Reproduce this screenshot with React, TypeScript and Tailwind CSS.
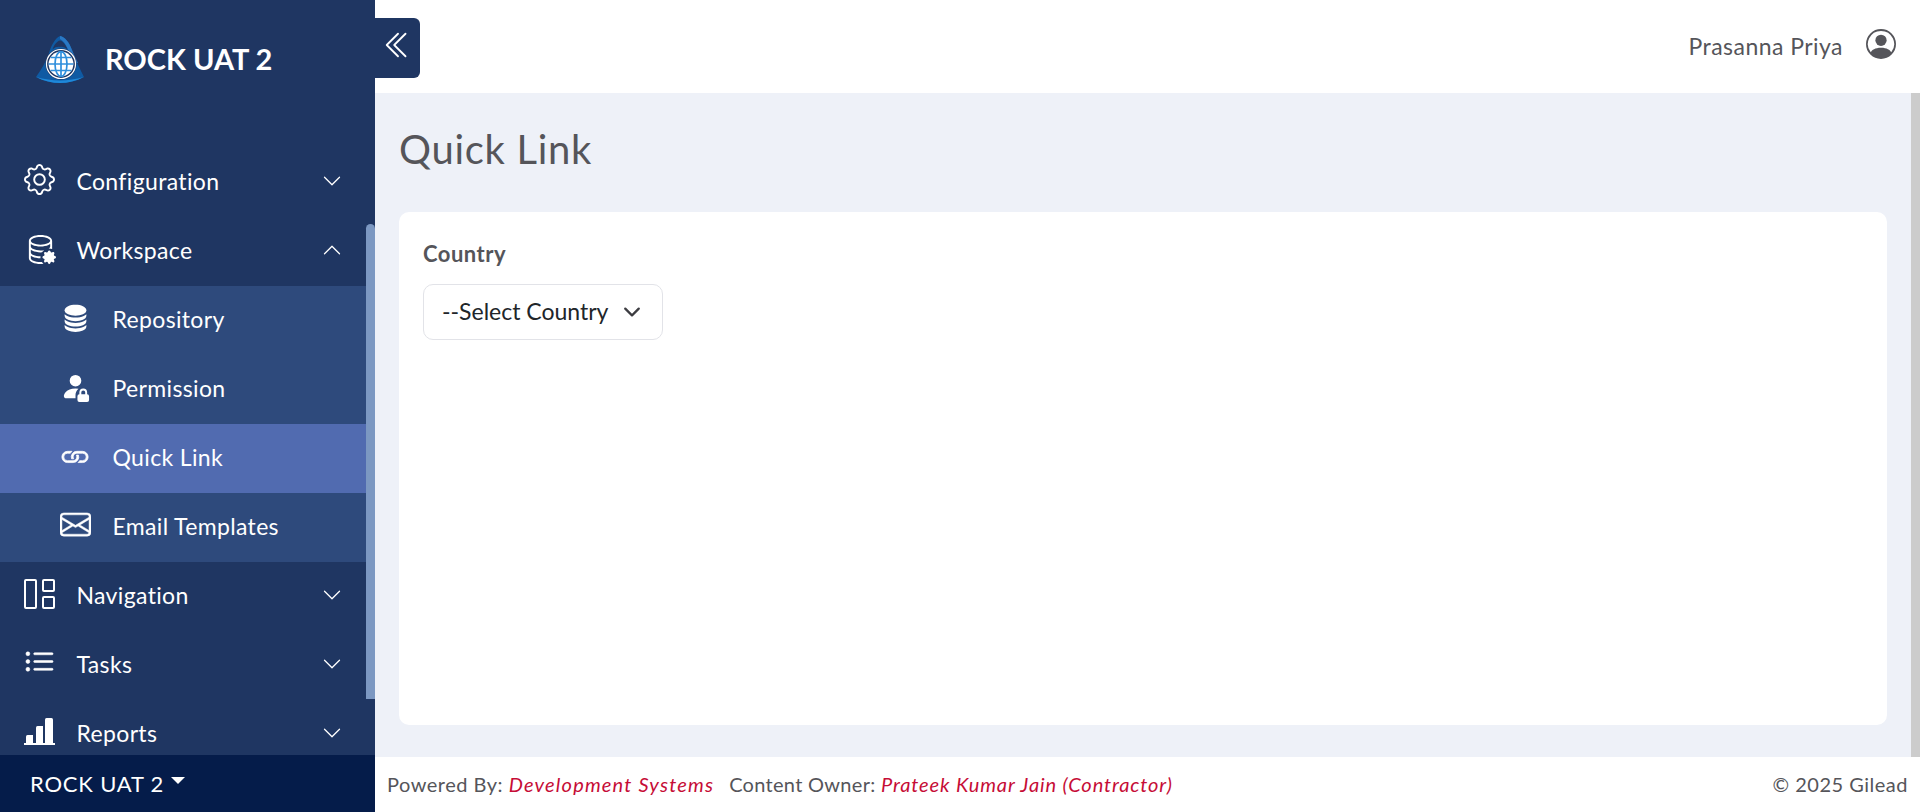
import { BsGear, BsDatabaseGear, BsDatabaseFill, BsPersonFillLock, BsChevronDown, BsChevronUp, BsChevronDoubleLeft, BsListUl, BsPersonCircle, BsEnvelope, BsLink } from "react-icons/bs";
import type { ReactNode } from "react";

function Logo() {
  return (
    <svg width="48" height="48" viewBox="0 0 48 48" className="shrink-0">
      <path d="M24 0 C29 1 33 6 36 14 C39 23 44 33 48 41 C40 45 32 47 24 47 C16 47 8 45 0 41 C5 34 10 26 13 17 C15 10 19 2 24 0Z" fill="#0f5aa3" />
      <path d="M24 4.5 C27 5 30 9 32 14 C29 11 26 10.5 24 11 C22 10.5 19 11 16.5 13.5 C18 9 21 5 24 4.5Z" fill="#1f3662" />
      <path d="M24 0 C29 1 33 6 36 14 C38 19 40 23 42 27 L37 27 C34 17 30 6 24 3Z" fill="#2a78c4" />
      <path d="M0 41 C8 43 16 44.5 24 44.5 C32 44.5 40 43 48 41 C40 45 32 47 24 47 C16 47 8 45 0 41Z" fill="#1e88d9" />
      <circle cx="25" cy="28" r="15.5" fill="#1f3662" />
      <circle cx="25" cy="28" r="14.5" fill="none" stroke="#ffffff" strokeWidth="1.2" />
      <circle cx="25" cy="28" r="12.4" fill="#ffffff" />
      <g stroke="#2f8fdc" strokeWidth="1.7" fill="none">
        <ellipse cx="25" cy="28" rx="6" ry="12.4" />
        <path d="M25 15.6V40.4M12.6 28H37.4M14.6 21.5H35.4M14.6 34.5H35.4" />
      </g>
    </svg>
  );
}

function NavIcon() {
  return (
    <svg width="31" height="30" viewBox="0 0 31 30" fill="none" stroke="currentColor" strokeWidth="2">
      <rect x="1" y="1" width="11" height="28" rx="1" />
      <rect x="19" y="1" width="11" height="11" rx="1" />
      <rect x="19" y="18" width="11" height="11" rx="1" />
    </svg>
  );
}

function ReportIcon() {
  return (
    <svg width="31" height="27" viewBox="0 0 31 27" fill="currentColor">
      <path d="M2 26 V18.5 Q2 17 3.5 17 H9 V26Z" />
      <path d="M12 26 V9.5 Q12 8 13.5 8 H19 V26Z" />
      <path d="M21 26 V1.5 Q21 0 22.5 0 H27.5 Q29 0 29 1.5 V26Z" />
      <rect x="0" y="25" width="31" height="2" />
    </svg>
  );
}

function TopItem({ icon, label, open }: { icon: ReactNode; label: string; open?: boolean }) {
  return (
    <div className="flex h-[69px] shrink-0 items-center pb-1 pl-6 pr-[33px] text-white">
      <span className="mb-[2px] flex w-[52.5px] shrink-0 items-center">{icon}</span>
      <span className="mt-[2px] flex-1 text-[23px] leading-none tracking-[0.35px]">{label}</span>
      {open ? <BsChevronUp size={20} /> : <BsChevronDown size={20} />}
    </div>
  );
}

function SubItem({ icon, label, active }: { icon: ReactNode; label: string; active?: boolean }) {
  return (
    <div className={`flex h-[69px] shrink-0 items-center pb-1 pl-[60px] text-white ${active ? "bg-[#516bb0]" : ""}`}>
      <span className="mb-[2px] flex w-[52.5px] shrink-0 items-center">{icon}</span>
      <span className="mt-[2px] text-[23px] leading-none tracking-[0.35px]">{label}</span>
    </div>
  );
}

export default function App() {
  return (
    <div className="flex h-[812px] w-[1920px] overflow-hidden bg-white font-['Lato','Liberation_Sans',sans-serif] text-[#55555a]">
      <aside className="relative flex w-[375px] shrink-0 flex-col bg-[#1f3662]">
        <div className="flex h-[148px] shrink-0 items-start pl-[36px] pt-[36px]">
          <Logo />
          <span className="ml-[21px] mt-[8px] text-[29px] font-bold leading-none text-white">ROCK UAT 2</span>
        </div>
        <div className="flex-1 overflow-hidden">
          <TopItem icon={<BsGear size={31} />} label="Configuration" />
          <TopItem icon={<BsDatabaseGear size={31} className="ml-[1px]" />} label="Workspace" open />
          <div className="mr-[9px] bg-[#2e4a7c]">
            <SubItem icon={<BsDatabaseFill size={29} className="ml-[1px]" />} label="Repository" />
            <SubItem icon={<BsPersonFillLock size={31} />} label="Permission" />
            <SubItem icon={<BsLink size={30} strokeWidth={0.4} />} label="Quick Link" active />
            <SubItem icon={<BsEnvelope size={31} strokeWidth={0.25} />} label="Email Templates" />
          </div>
          <TopItem icon={<NavIcon />} label="Navigation" />
          <TopItem icon={<BsListUl size={31} strokeWidth={0.3} />} label="Tasks" />
          <TopItem icon={<ReportIcon />} label="Reports" />
        </div>
        <div className="flex h-[57px] shrink-0 items-center bg-[#051c4a] pl-[30px] text-[22px] tracking-[0.8px] text-white">
          ROCK UAT 2
          <span className="mb-[6px] ml-[7px] h-0 w-0 border-x-[7px] border-t-[7px] border-x-transparent border-t-white" />
        </div>
        <div className="absolute left-[366px] top-[224px] h-[475px] w-[9px] rounded-t-full rounded-b-md bg-[#7c98c2]" />
        <button className="absolute left-[375px] top-[18px] flex h-[60px] w-[45px] items-center justify-center rounded-r-md bg-[#1f3662] pb-[6px] text-white">
          <BsChevronDoubleLeft size={30} />
        </button>
      </aside>
      <div className="flex min-w-0 flex-1 flex-col">
        <header className="flex h-[93px] shrink-0 items-start justify-end pr-[24px] pt-[29px]">
          <span className="mr-[23px] mt-[3px] text-[23px] leading-[28px] tracking-[0.45px]">Prasanna Priya</span>
          <BsPersonCircle size={30} />
        </header>
        <div className="flex min-h-0 flex-1">
          <main className="flex min-w-0 flex-1 flex-col bg-[#eef1f8] pb-[32px] pl-6 pr-[24px]">
            <h1 className="flex h-[119px] shrink-0 items-center pb-2 text-[40px] font-normal leading-none tracking-[0.7px]">Quick Link</h1>
            <section className="flex-1 rounded-[10px] bg-white px-6 pt-[28px]">
              <label className="block text-[22px] font-bold leading-7 tracking-[0.5px]">Country</label>
              <div className="relative mt-[16px] w-[240px]">
                <select className="h-[56px] w-full appearance-none rounded-[10px] border border-[#e2e3e8] bg-white pb-[1px] pl-[18px] pr-[52px] text-[23px] text-[#212529]">
                  <option>--Select Country</option>
                </select>
                <BsChevronDown size={18} strokeWidth={1} className="pointer-events-none absolute right-[22px] top-[19px] text-[#3a3a3f]" />
              </div>
            </section>
          </main>
          <div className="w-[9px] shrink-0 bg-[#cccccc]" />
        </div>
        <footer className="flex h-[55px] shrink-0 items-center justify-between px-3 pb-[2px] text-[20px] tracking-[0.5px]">
          <div>
            Powered By: <em className="tracking-[1.2px] text-[#c60c36]">Development Systems</em>
            <span className="ml-[15px] tracking-[0.3px]">Content Owner: </span>
            <em className="tracking-[0.9px] text-[#c60c36]">Prateek Kumar Jain (Contractor)</em>
          </div>
          <div>© 2025 Gilead</div>
        </footer>
      </div>
    </div>
  );
}
